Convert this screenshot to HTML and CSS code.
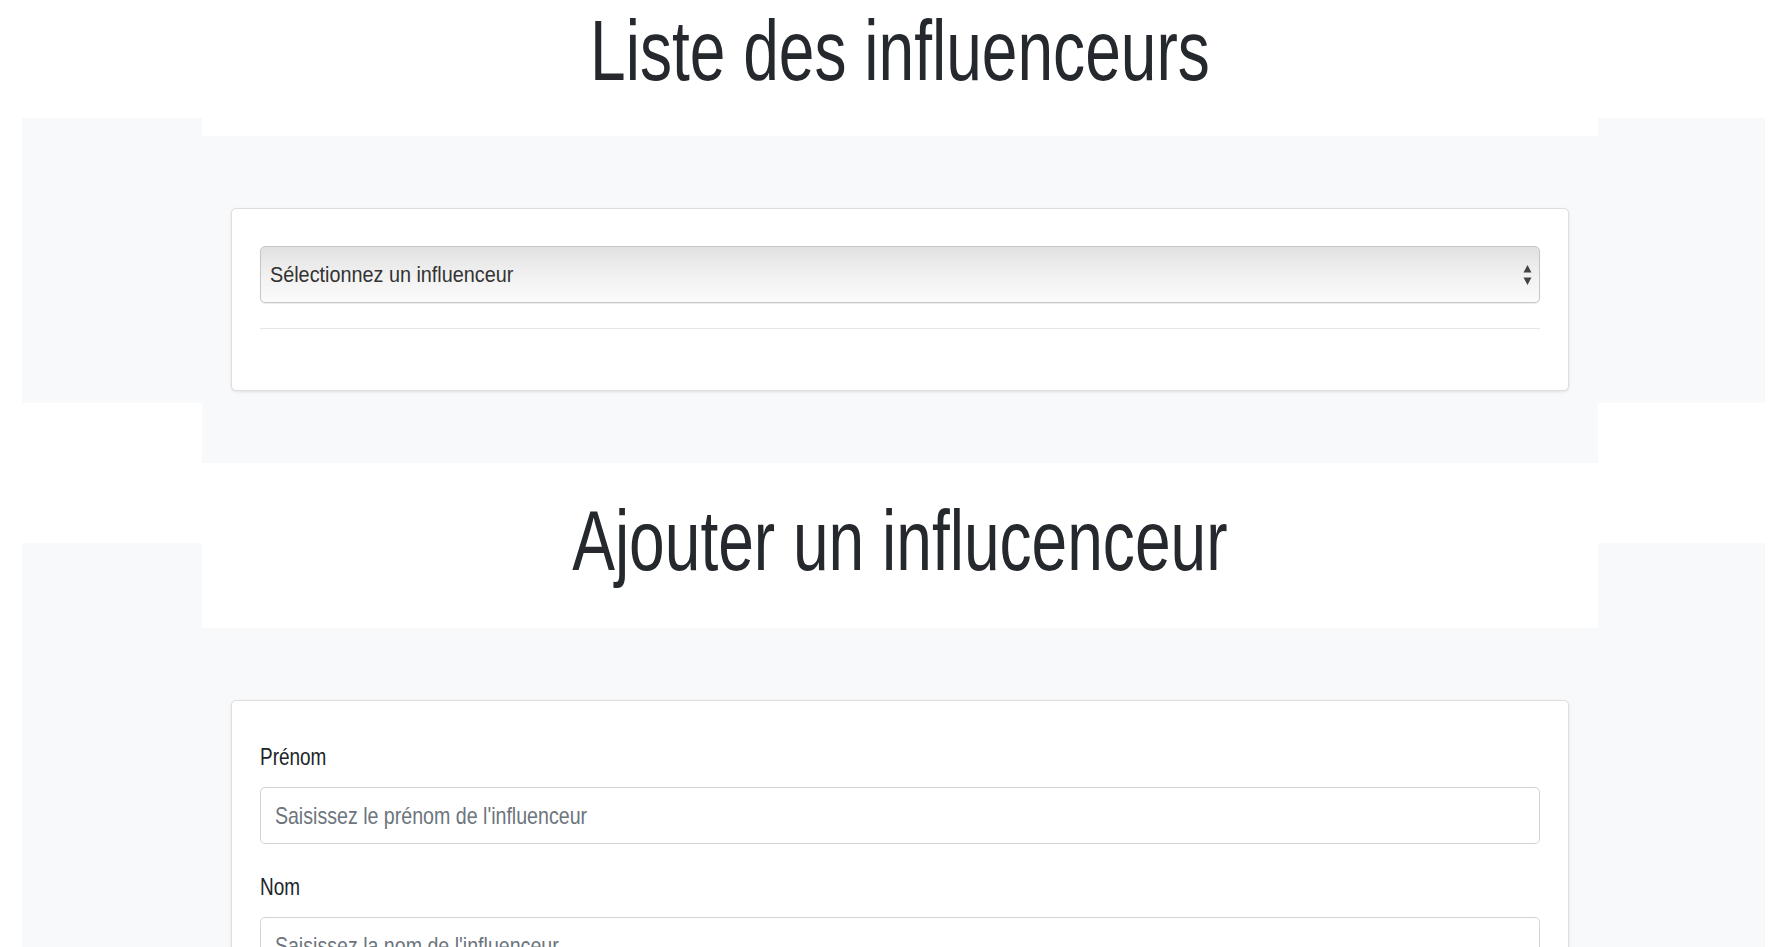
FILE: index.html
```html
<!DOCTYPE html>
<html lang="fr">
<head>
<meta charset="utf-8">
<title>Influenceurs</title>
<link rel="stylesheet" href="styles.css">
</head>
<body>
<section class="section section-list">
  <header class="title-block">
    <h1 class="page-title"><span class="title-text">Liste des influenceurs</span></h1>
  </header>
  <div class="panel">
    <div class="card">
      <div class="picker-box">
        <select class="picker">
          <option>Sélectionnez un influenceur</option>
        </select>
      </div>
      <hr class="divider">
    </div>
  </div>
</section>
<section class="section section-add">
  <header class="title-block title-block-add">
    <h1 class="page-title"><span class="title-text">Ajouter un influcenceur</span></h1>
  </header>
  <div class="panel">
    <form class="card form-card">
      <div class="field">
        <label class="field-label" for="prenom"><span class="label-text">Prénom</span></label>
        <div class="input-box">
          <input class="field-input" id="prenom" type="text" placeholder="Saisissez le prénom de l'influenceur">
        </div>
      </div>
      <div class="field">
        <label class="field-label" for="nom"><span class="label-text">Nom</span></label>
        <div class="input-box">
          <input class="field-input" id="nom" type="text" placeholder="Saisissez la nom de l'influenceur">
        </div>
      </div>
      <div class="field">
        <label class="field-label" for="reseau"><span class="label-text">Réseau</span></label>
        <div class="input-box">
          <input class="field-input" id="reseau" type="text" placeholder="Saisissez le réseau de l'influenceur">
        </div>
      </div>
    </form>
  </div>
</section>
</body>
</html>
```
FILE: styles.css
```css
html, body {
  margin: 0;
  padding: 0;
}

body {
  background: #ffffff;
  color: #212529;
  font-family: "Liberation Sans", Arial, sans-serif;
  overflow: hidden;
}

.section {
  background-image: linear-gradient(#f8f9fa, #f8f9fa);
  background-repeat: no-repeat;
}

.section-list {
  background-position: 22px 118px;
  background-size: 1743px 285px;
}

.section-add {
  background-position: 22px 80px;
  background-size: 1743px 2000px;
}

.title-block {
  width: 1396px;
  margin-left: 202px;
  background: #ffffff;
  padding: 0 0 36px;
}

.title-block-add {
  padding: 27px 0 38px;
}

.page-title {
  margin: 0;
  font-size: 86px;
  font-weight: 400;
  line-height: 100px;
  text-align: center;
  color: #25292d;
}

.title-text {
  display: inline-block;
  transform: scaleX(0.745);
  transform-origin: center;
  white-space: nowrap;
}

.panel {
  box-sizing: border-box;
  width: 1396px;
  margin-left: 202px;
  background: #f8f9fa;
  padding: 72px 29px;
}

.card {
  display: block;
  background: #ffffff;
  border: 1px solid #dedede;
  border-radius: 5px;
  box-shadow: 0 1px 3px rgba(0, 0, 0, 0.1);
  padding: 37px 28px;
}

.form-card {
  padding: 38px 28px;
}

.picker-box {
  box-sizing: border-box;
  height: 57px;
  overflow: hidden;
  border: 1px solid #c6c6c6;
  border-radius: 5px;
  background:
    url("data:image/svg+xml,%3Csvg xmlns='http://www.w3.org/2000/svg' width='9' height='20' viewBox='0 0 9 20'%3E%3Cpath d='M0.5 7.5 L4.5 0 L8.5 7.5 Z M0.5 12.5 L4.5 20 L8.5 12.5 Z' fill='%23444'/%3E%3C/svg%3E") no-repeat right 7px center,
    linear-gradient(#e2e2e2, #f3f3f3 60%, #fbfbfb);
  box-shadow: 0 1px 1px rgba(0, 0, 0, 0.08);
}

.picker {
  display: block;
  box-sizing: border-box;
  width: calc(100% / 0.9);
  height: 100%;
  margin: 0;
  padding: 0 40px 0 10px;
  border: 0;
  background: transparent;
  -webkit-appearance: none;
  appearance: none;
  color: #333333;
  font-family: "Liberation Sans", Arial, sans-serif;
  font-size: 22px;
  transform: scaleX(0.9);
  transform-origin: left center;
  outline: none;
}

.divider {
  height: 0;
  margin: 25px 0 24px;
  border: 0;
  border-top: 1px solid #e6e6e6;
}

.field {
  margin-bottom: 25px;
}

.field-label {
  display: block;
  margin-bottom: 12px;
  font-size: 24px;
  line-height: 36px;
  color: #212529;
}

.label-text {
  display: inline-block;
  transform: scaleX(0.79);
  transform-origin: left center;
}

.input-box {
  box-sizing: border-box;
  height: 57px;
  overflow: hidden;
  border: 1px solid #ced4da;
  border-radius: 5px;
  background: #ffffff;
}

.field-input {
  display: block;
  box-sizing: border-box;
  width: calc(100% / 0.817);
  height: 100%;
  margin: 0;
  padding: 0 0 0 17px;
  border: 0;
  background: transparent;
  color: #495057;
  font-family: "Liberation Sans", Arial, sans-serif;
  font-size: 24px;
  transform: scaleX(0.817);
  transform-origin: left center;
  outline: none;
}

.field-input::placeholder {
  color: #6c757d;
  opacity: 1;
}
```
